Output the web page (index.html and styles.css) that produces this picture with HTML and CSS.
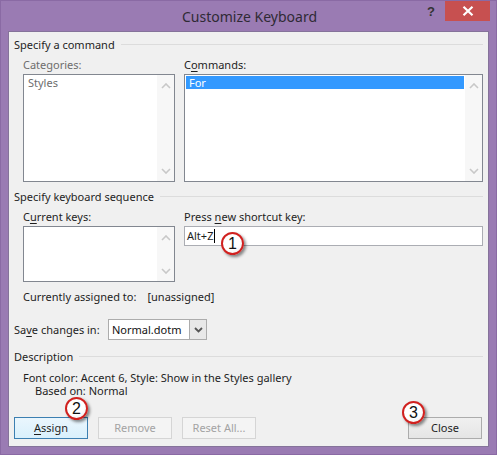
FILE: index.html
```html
<!DOCTYPE html>
<html>
<head>
<meta charset="utf-8">
<link rel="stylesheet" href="styles.css">
</head>
<body>
<div class="window">
  <div class="titlebar">
    <div class="title">Customize Keyboard</div>
    <div class="help">?</div>
    <div class="closebtn">
      <svg width="12" height="10" viewBox="0 0 12 10"><path d="M1.5 0.8 L10.5 9.2 M10.5 0.8 L1.5 9.2" stroke="#fff" stroke-width="2.2" fill="none"/></svg>
    </div>
  </div>
  <div class="panel">
    <div class="group-head"><span>Specify a command</span><i class="rule"></i></div>
    <div class="cols">
      <div class="col col-left">
        <div class="label disabled">Categories:</div>
        <div class="listbox tall">
          <div class="items"><div class="item disabled">Styles</div></div>
          <div class="scroll">
            <svg width="10" height="6" viewBox="0 0 10 6"><path d="M1 5 L5 1 L9 5" stroke="#c8c8c8" stroke-width="1.6" fill="none"/></svg>
            <svg width="10" height="6" viewBox="0 0 10 6"><path d="M1 1 L5 5 L9 1" stroke="#c8c8c8" stroke-width="1.6" fill="none"/></svg>
          </div>
        </div>
      </div>
      <div class="col col-right">
        <div class="label">C<u>o</u>mmands:</div>
        <div class="listbox tall">
          <div class="items"><div class="item selected">For</div></div>
          <div class="scroll">
            <svg width="10" height="6" viewBox="0 0 10 6"><path d="M1 5 L5 1 L9 5" stroke="#c8c8c8" stroke-width="1.6" fill="none"/></svg>
            <svg width="10" height="6" viewBox="0 0 10 6"><path d="M1 1 L5 5 L9 1" stroke="#c8c8c8" stroke-width="1.6" fill="none"/></svg>
          </div>
        </div>
      </div>
    </div>

    <div class="group-head gap-top"><span>Specify keyboard sequence</span><i class="rule"></i></div>
    <div class="cols">
      <div class="col col-left">
        <div class="label">C<u>u</u>rrent keys:</div>
        <div class="listbox short">
          <div class="items"></div>
          <div class="scroll">
            <svg width="10" height="6" viewBox="0 0 10 6"><path d="M1 5 L5 1 L9 5" stroke="#c8c8c8" stroke-width="1.6" fill="none"/></svg>
            <svg width="10" height="6" viewBox="0 0 10 6"><path d="M1 1 L5 5 L9 1" stroke="#c8c8c8" stroke-width="1.6" fill="none"/></svg>
          </div>
        </div>
      </div>
      <div class="col col-right">
        <div class="label">Press <u>n</u>ew shortcut key:</div>
        <div class="textbox"><span>Alt+Z</span><i class="caret"></i></div>
      </div>
    </div>
    <div class="assigned"><span class="assigned-label">Currently assigned to:</span><span>[unassigned]</span></div>

    <div class="save-row">
      <span class="save-label">Sa<u>v</u>e changes in:</span>
      <div class="combo">
        <span class="combo-text">Normal.dotm</span>
        <span class="combo-btn"><svg width="9" height="6" viewBox="0 0 9 6"><path d="M1 1 L4.5 4.5 L8 1" stroke="#555" stroke-width="1.8" fill="none"/></svg></span>
      </div>
    </div>

    <div class="group-head desc-head"><span>Description</span><i class="rule"></i></div>
    <div class="desc">
      <div>Font color: Accent 6, Style: Show in the Styles gallery</div>
      <div class="desc-indent">Based on: Normal</div>
    </div>

    <div class="buttons">
      <div class="btn btn-default"><u>A</u>ssign</div>
      <div class="btn btn-disabled">Remove</div>
      <div class="btn btn-disabled">Reset All...</div>
      <div class="spacer"></div>
      <div class="btn">Close</div>
    </div>
  </div>

  <div class="callout c1">1</div>
  <div class="callout c2">2</div>
  <div class="callout c3">3</div>
</div>
</body>
</html>
```

FILE: styles.css
```css
* { box-sizing: border-box; }
html, body { margin: 0; padding: 0; }
body {
  width: 497px;
  height: 455px;
  overflow: hidden;
  font-family: "Noto Sans", "Liberation Sans", sans-serif;
  font-size: 11px;
  color: #1e1e1e;
}
.window {
  position: relative;
  width: 497px;
  height: 455px;
  background: #9a7bb3;
  border: 1px solid #8a6aa4;
  display: flex;
  flex-direction: column;
}
.titlebar {
  position: relative;
  height: 30px;
  flex: none;
}
.title {
  text-align: center;
  font-size: 14px;
  line-height: 31px;
  color: #2f2a35;
  padding-left: 2px;
}
.help {
  position: absolute;
  left: 426px;
  top: 3px;
  font-size: 13px;
  font-weight: bold;
  color: #333;
  font-family: "Liberation Sans", sans-serif;
}
.closebtn {
  position: absolute;
  left: 444px;
  top: 0;
  width: 45px;
  height: 20px;
  background: #c75050;
  display: flex;
  align-items: center;
  justify-content: center;
}
.panel {
  margin: 0 7px 0 7px;
  height: 416px;
  background: #f0f0f0;
  border: 1px solid #85739a;
  padding: 5px 5px 0 5px;
}
.group-head {
  display: flex;
  align-items: center;
  height: 16px;
  line-height: 16px;
}
.group-head .rule {
  flex: 1;
  height: 1px;
  background: #dcdcdc;
  margin-left: 6px;
  margin-top: -1px;
}
.gap-top { margin-top: 7px; }
.cols {
  display: flex;
  padding-left: 9px;
  gap: 9px;
  margin-top: 4px;
}
.col-left { width: 152px; }
.col-right { flex: 1; }
.label {
  height: 16px;
  line-height: 16px;
  margin-bottom: 1px;
}
.label.disabled { color: #6d6d6d; }
u { text-decoration: underline; text-underline-offset: 2px; }
.listbox {
  display: flex;
  background: #fff;
  border: 1px solid #828790;
}
.listbox.tall { height: 108px; }
.listbox.short { height: 56px; }
.items {
  flex: 1;
  padding: 1px;
}
.item {
  height: 13px;
  line-height: 13px;
  padding-left: 3px;
}
.item.disabled { color: #6d6d6d; }
.item.selected { background: #3399ff; color: #fff; }
.scroll {
  width: 17px;
  background: #f7f7f7;
  display: flex;
  flex-direction: column;
  justify-content: space-between;
  align-items: center;
  padding: 8px 0 7px 0;
}
.textbox {
  height: 20px;
  background: #fff;
  border: 1px solid #abadb3;
  display: flex;
  align-items: center;
  padding-left: 2px;
  line-height: 16px;
}
.caret {
  width: 1px;
  height: 14px;
  background: #000;
  margin-left: 1px;
}
.assigned {
  padding-left: 9px;
  margin-top: 7px;
  height: 16px;
  line-height: 16px;
}
.assigned-label { margin-right: 11px; }
.save-row {
  display: flex;
  align-items: center;
  margin-top: 14px;
  height: 21px;
}
.save-label { width: 94px; }
.combo {
  display: flex;
  width: 99px;
  height: 21px;
  border: 1px solid #acacac;
  background: #fff;
}
.combo-text {
  flex: 1;
  line-height: 19px;
  padding-left: 3px;
  color: #111;
}
.combo-btn {
  width: 17px;
  background: #e8e8e8;
  border-left: 1px solid #acacac;
  display: flex;
  align-items: center;
  justify-content: center;
}
.desc-head { margin-top: 9px; }
.desc {
  padding-left: 9px;
  margin-top: 6px;
  line-height: 13px;
}
.desc-indent { padding-left: 12px; }
.buttons {
  display: flex;
  gap: 10px;
  margin-top: 20px;
  padding-right: 1px;
}
.spacer { flex: 1; }
.btn {
  width: 74px;
  height: 22px;
  border: 1px solid #acacac;
  background: linear-gradient(#f0f0f0, #e5e5e5);
  text-align: center;
  line-height: 20px;
  color: #1e1e1e;
}
.btn-default {
  border-color: #3c7fb1;
  background: linear-gradient(#eaf6fd, #d9f0fc);
}
.btn-disabled {
  border-color: #d5d5d5;
  background: #f4f4f4;
  color: #a3a3a3;
}
.callout {
  position: absolute;
  width: 23px;
  height: 23px;
  border-radius: 50%;
  background: radial-gradient(circle at 40% 35%, #ffffff 55%, #e8e8e8);
  border: 2px solid #d0211f;
  box-shadow: 2px 2px 3px rgba(0,0,0,0.45);
  font-family: "Liberation Sans", sans-serif;
  font-size: 16px;
  line-height: 19px;
  text-align: center;
  color: #111;
}
.c1 { left: 220px; top: 231px; }
.c2 { left: 64px; top: 396px; }
.c3 { left: 401px; top: 400px; }
```
